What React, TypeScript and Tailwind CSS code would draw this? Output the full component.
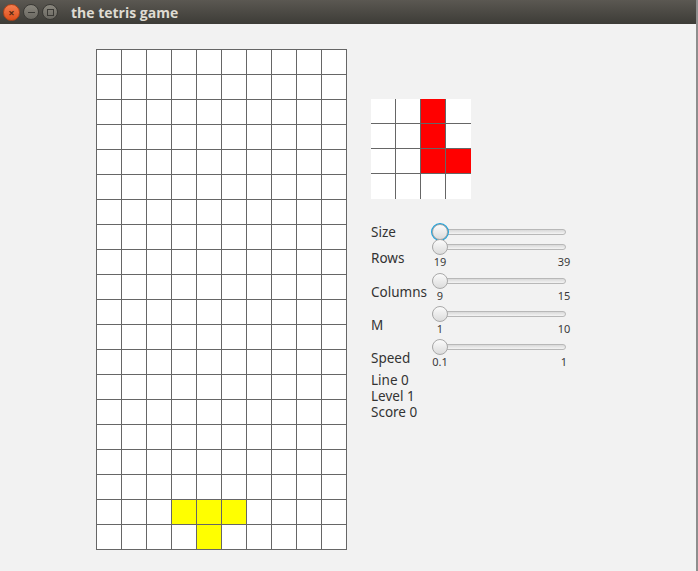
import React from "react";

const ROWS = 20;
const COLS = 10;
const yellow = new Set(["18-3", "18-4", "18-5", "19-4"]);
const red = new Set(["0-2", "1-2", "2-2", "2-3"]);

function Slider({ min, max, focus }: { min?: string; max?: string; focus?: boolean }) {
  return (
    <div className="flex w-[140px] flex-col">
      <div className="relative h-[16px] w-[134px]">
        <div className="absolute left-0 top-[5px] h-[6px] w-[134px] rounded-full border border-[#b8b8b8] bg-gradient-to-b from-[#d9d9d9] to-[#f4f4f4]" />
        {focus && (
          <div className="absolute left-[-1px] top-[-1px] h-[18px] w-[18px] rounded-full border-[2px] border-[#1fa3dc]" />
        )}
        <div className="absolute left-0 top-0 h-[16px] w-[16px] rounded-full border border-[#a9a9a9] bg-gradient-to-b from-[#fbfbfb] to-[#dcdcdc]" />
      </div>
      {min !== undefined && (
        <div className="flex justify-between text-[11px] leading-[14px] text-[#3a3a3a]">
          <span className="w-[16px] text-center">{min}</span>
          <span className="w-[16px] text-center">{max}</span>
        </div>
      )}
    </div>
  );
}

export default function App() {
  return (
    <div
      className="flex h-[571px] w-[698px] flex-col overflow-hidden border-r-2 border-[#8e8e8e] bg-[#f2f2f2]"
      style={{ fontFamily: '"Noto Sans", "Open Sans", sans-serif' }}
    >
      {/* title bar */}
      <div className="flex h-[24px] shrink-0 items-center bg-gradient-to-b from-[#5b5852] to-[#3d3c37] pl-[3px]">
        <div className="flex h-[17px] w-[17px] items-center justify-center rounded-full border border-[#b24318] bg-gradient-to-b from-[#f47e4f] to-[#df4f17] text-[11px] font-bold leading-none text-[#5a2a12]">
          ×
        </div>
        <div className="ml-[3px] flex h-[16px] w-[16px] items-center justify-center rounded-full border border-[#3a3935] bg-gradient-to-b from-[#8a877e] to-[#6a6861]">
          <div className="h-[1px] w-[7px] bg-[#3a3935]" />
        </div>
        <div className="ml-[3px] flex h-[16px] w-[16px] items-center justify-center rounded-full border border-[#3a3935] bg-gradient-to-b from-[#8a877e] to-[#6a6861]">
          <div className="h-[7px] w-[7px] border border-[#3a3935]" />
        </div>
        <div
          className="ml-[13px] text-[14px] font-bold text-[#dfdbd2]"
          style={{ fontFamily: '"Open Sans", "Noto Sans", sans-serif' }}
        >
          the tetris game
        </div>
      </div>

      <div className="flex pl-[96px] pt-[25px]">
        {/* board */}
        <div className="grid grid-cols-[repeat(10,24px)] gap-px bg-[#666666] p-px">
          {Array.from({ length: ROWS * COLS }).map((_, i) => {
            const r = Math.floor(i / COLS);
            const c = i % COLS;
            const y = yellow.has(`${r}-${c}`);
            return <div key={i} className={`h-[24px] w-[24px] ${y ? "bg-[#ffff00]" : "bg-white"}`} />;
          })}
        </div>

        {/* side panel */}
        <div className="ml-[24px] mt-[50px] flex flex-col text-[13.5px] text-[#333333]">
          <div className="grid w-[100px] grid-cols-[24px_24px_24px_25px] grid-rows-[24px_24px_24px_25px] gap-px bg-[#666666]">
            {Array.from({ length: 16 }).map((_, i) => {
              const r = Math.floor(i / 4);
              const c = i % 4;
              const rd = red.has(`${r}-${c}`);
              return <div key={i} className={rd ? "bg-[#ff0000]" : "bg-white"} />;
            })}
          </div>

          <div className="mt-[25px] flex h-[15px] items-start">
            <div className="w-[61px] leading-[16px]">Size</div>
            <Slider focus />
          </div>
          <div className="flex items-center">
            <div className="w-[61px] pt-[7px] leading-[16px]">Rows</div>
            <Slider min="19" max="39" />
          </div>
          <div className="mt-[4px] flex items-center">
            <div className="w-[61px] pt-[7px] leading-[16px]">Columns</div>
            <Slider min="9" max="15" />
          </div>
          <div className="mt-[3px] flex items-center">
            <div className="w-[61px] pt-[7px] leading-[16px]">M</div>
            <Slider min="1" max="10" />
          </div>
          <div className="mt-[3px] flex items-center">
            <div className="w-[61px] pt-[7px] leading-[16px]">Speed</div>
            <Slider min="0.1" max="1" />
          </div>
          <div className="mt-[3px] leading-[16px]">Line 0</div>
          <div className="leading-[16px]">Level 1</div>
          <div className="leading-[16px]">Score 0</div>
        </div>
      </div>
    </div>
  );
}
